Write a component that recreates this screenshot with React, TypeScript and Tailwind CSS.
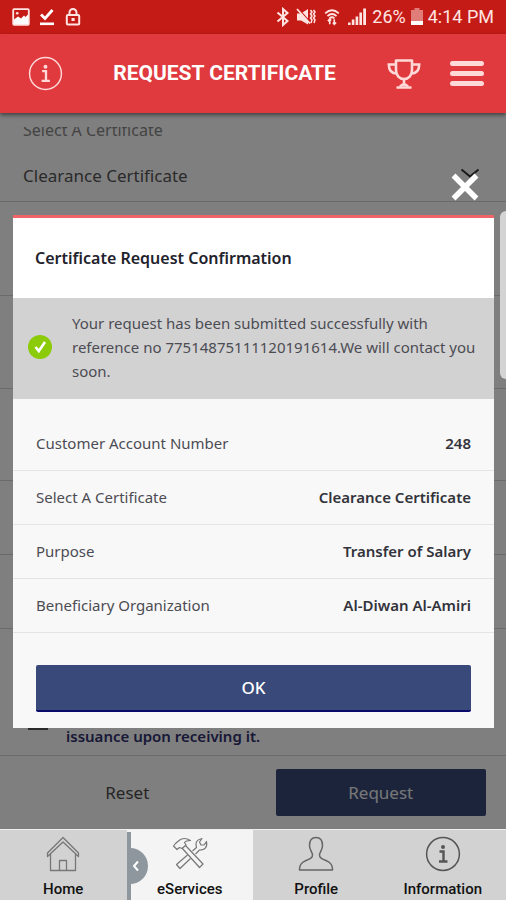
import React from "react";

const details = [
  { label: "Customer Account Number", value: "248" },
  { label: "Select A Certificate", value: "Clearance Certificate" },
  { label: "Purpose", value: "Transfer of Salary" },
  { label: "Beneficiary Organization", value: "Al-Diwan Al-Amiri" },
];

function StatusBar() {
  return (
    <div className="flex h-[34px] items-center justify-between bg-[#c51b17] px-3 text-lg text-[#ffe4e1]">
      <div className="flex items-center gap-2">
        <svg width="18" height="18" viewBox="0 0 18 18" fill="none">
          <rect x="1.2" y="1.2" width="15.6" height="15.6" rx="1" stroke="currentColor" strokeWidth="1.8" />
          <path d="M2 16V11.5L6 8.5L9 10.5L12 7.5L13.5 9L16 6.5V16Z" fill="#fff" />
          <circle cx="5.2" cy="5.2" r="1.3" fill="currentColor" />
        </svg>
        <svg width="18" height="18" viewBox="0 0 18 18" fill="none" stroke="#fff">
          <path d="M3 6.5L7 10.5L14.5 2" strokeWidth="2.8" />
          <path d="M2 15.8H16" strokeWidth="2.6" />
        </svg>
        <svg width="18" height="18" viewBox="0 0 18 18" fill="none" stroke="currentColor">
          <rect x="2.8" y="7" width="12.4" height="9.5" rx="1" strokeWidth="2" />
          <path d="M5.5 7V4.5a3.5 3.5 0 0 1 7 0V7" strokeWidth="2" />
          <rect x="7.5" y="10" width="3.2" height="3" fill="currentColor" stroke="none" />
        </svg>
      </div>
      <div className="flex items-center gap-[5px]">
        <svg width="14" height="20" viewBox="0 0 14 20" fill="none" stroke="currentColor" strokeWidth="2">
          <path d="M1.5 5.5L11.5 14L7 18V2L11.5 6L1.5 14.5" />
        </svg>
        <svg width="22" height="20" viewBox="0 0 22 20" fill="none" stroke="currentColor">
          <path d="M2 6.5H6L13 2V17.5L6 13.5H2Z" fill="currentColor" stroke="none" />
          <path d="M3 1.5L16 16" stroke="#c51b17" strokeWidth="1.4" />
          <path d="M2 2L15 16.5" strokeWidth="1.8" />
          <path d="M15.5 3L17 5L15.5 7L17 9L15.5 11L17 13L16 16M18.5 3L20 5L18.5 7L20 9L18.5 11L20 13L19 16" strokeWidth="1.5" />
        </svg>
        <svg width="20" height="20" viewBox="0 0 22 20" fill="none" stroke="currentColor" strokeWidth="2">
          <path d="M3.5 6Q11 -1 18.5 6M6 9Q11 4.5 16 9M8.3 11.5Q11 9 13.7 11.5" />
          <path d="M8.5 18V12.5M6.5 14.5L8.5 12.3L10 14M13.5 12.5V18M12 16L13.5 18L15.5 16" strokeWidth="1.8" />
        </svg>
        <svg width="20" height="20" viewBox="0 0 20 20" fill="currentColor">
          <path d="M1 18V15.5H3.6V18ZM4.8 18V12.5H7.4V18ZM8.6 18V9.5H11.2V18ZM12.4 18V5.5H15V18ZM16.2 18V1.5H19V18Z" />
        </svg>
        <span>26%</span>
        <svg width="12" height="20" viewBox="0 0 12 20">
          <path d="M0 3H3.5V1H8.5V3H12V18H0Z" fill="#e07d78" />
          <path d="M0 14H12V18H0Z" fill="#fff" />
        </svg>
        <span>4:14 PM</span>
      </div>
    </div>
  );
}

function InfoIcon({ size }: { size: number }) {
  return (
    <svg width={size} height={size} viewBox="0 0 36 36" fill="none" stroke="currentColor">
      <circle cx="18" cy="18" r="16.4" strokeWidth="1.5" />
      <circle cx="18" cy="11" r="2" fill="currentColor" stroke="none" />
      <path d="M14.5 15.5H18.5V25M14 25.5H22.5" strokeWidth="2.4" />
    </svg>
  );
}

function AppBar() {
  return (
    <header className="relative z-10 flex h-[79px] items-center bg-[#e03a3e] pr-[22px] pl-7 text-[#ffd9d8] shadow-[0_2px_4px_rgba(0,0,0,0.5)]">
      <button aria-label="Help">
        <InfoIcon size={35} />
      </button>
      <h1 className="flex-1 text-center font-['Roboto',sans-serif] text-[21px] font-bold text-white">
        REQUEST CERTIFICATE
      </h1>
      <div className="flex items-center gap-7">
        <button aria-label="Rewards">
          <svg width="36" height="34" viewBox="0 0 36 34" fill="none" stroke="currentColor" strokeWidth="2.6">
            <path d="M10 3.5H26V13C26 18.5 22.5 22 18 22S10 18.5 10 13Z" strokeLinejoin="round" />
            <path d="M10 7.5H2.8C2.8 13.5 6 16.5 11 16.5M26 7.5H33.2C33.2 13.5 30 16.5 25 16.5" />
            <path d="M18 22V29M10.5 30.5H25.5" />
            <path d="M14 29.5Q18 25 22 29.5" />
          </svg>
        </button>
        <button aria-label="Menu" className="flex w-[34px] flex-col gap-[5px]">
          <span className="h-[5px] rounded-full bg-current" />
          <span className="h-[5px] rounded-full bg-current" />
          <span className="h-[5px] rounded-full bg-current" />
        </button>
      </div>
    </header>
  );
}

function RequestForm() {
  return (
    <form className="flex flex-1 flex-col bg-white pt-[14px] text-[#555]">
      <div className="flex-1 overflow-hidden">
        <div className="flex h-[75px] flex-col border-b border-[#d4d4d4] px-[23px]">
          <label htmlFor="certificate" className="-mt-[9px] block text-base leading-6 text-[#888]">
            Select A Certificate
          </label>
          <div className="relative mt-[22px]">
            <select id="certificate" className="w-full appearance-none text-[17px] leading-6">
              <option>Clearance Certificate</option>
            </select>
            <svg className="absolute top-1 right-[3px] text-[#333]" width="20" height="12" viewBox="0 0 20 12" fill="none" stroke="currentColor" strokeWidth="2">
              <path d="M1.5 1.5L10 8.5L18.5 1.5" />
            </svg>
          </div>
        </div>
        <div className="h-[94px] border-b border-[#d4d4d4]" />
        <div className="h-[93px] border-b border-[#d4d4d4]" />
        <div className="h-[92px] border-b border-[#d4d4d4]" />
        <div className="h-[74px] border-b border-[#d4d4d4]" />
        <div className="h-[74px] border-b border-[#d4d4d4]" />
        <div className="flex h-[126px] items-end gap-[18px] px-7 pb-[7px]">
          <input type="checkbox" aria-label="Accept" className="mb-[18px] size-5 appearance-none border-2 border-[#555]" />
          <span className="text-[15px] leading-6 font-semibold text-[#30306e]">issuance upon receiving it.</span>
        </div>
      </div>
      <div className="grid grid-cols-2 gap-[43px] border-t border-[#d4d4d4] py-[13px] pr-5 pl-[22px] text-[17px]">
        <button type="reset" className="text-[#4a4a4a]">
          Reset
        </button>
        <button type="button" className="h-[47px] rounded-xs bg-[#394979] text-[#eee]">
          Request
        </button>
      </div>
    </form>
  );
}

function ConfirmationDialog() {
  return (
    <div className="absolute inset-0 bg-black/50 pt-[60px] pr-3 pl-[13px] text-[#4c4c54]">
      <div className="flex h-[42px] items-start justify-end pr-[14px] text-white">
        <button aria-label="Close">
          <svg width="30" height="28" viewBox="0 0 30 28" fill="none" stroke="currentColor" strokeWidth="5.5">
            <path d="M3.5 2.5L26.5 25.5M26.5 2.5L3.5 25.5" />
          </svg>
        </button>
      </div>
      <section role="dialog" aria-label="Certificate Request Confirmation" className="bg-[#f8f8f8]">
        <h2 className="border-t-[3px] border-[#ee6467] bg-white px-[22px] py-7 text-base leading-6 font-semibold text-[#22222c]">
          Certificate Request Confirmation
        </h2>
        <div className="flex items-center gap-5 bg-[#d2d2d2] pt-[13px] pr-3 pb-4 pl-[15px] text-[15px] leading-6">
          <svg width="24" height="24" viewBox="0 0 24 24" className="shrink-0">
            <circle cx="12" cy="12" r="12" fill="#8bcb0a" />
            <path d="M7.5 12L10.8 16L17 7" fill="none" stroke="#fff" strokeWidth="2.6" />
          </svg>
          <p>Your request has been submitted successfully with reference no 77514875111120191614.We will contact you soon.</p>
        </div>
        <dl className="pt-[18px] text-[15px]">
          {details.map((row) => (
            <div key={row.label} className="flex h-[54px] items-center justify-between border-b border-[#e4e4e4] px-[23px]">
              <dt>{row.label}</dt>
              <dd className="font-semibold text-[#33333b]">{row.value}</dd>
            </div>
          ))}
        </dl>
        <div className="px-[23px] pt-8 pb-4">
          <button className="h-[47px] w-full rounded-xs border-b-2 border-[#0a0a6c] bg-[#394979] text-[17px] font-medium text-white">OK</button>
        </div>
      </section>
      <div className="absolute top-[98px] right-0 h-[168px] w-[6px] rounded-l-md bg-[#d4d4d4]" />
    </div>
  );
}

function TabBar() {
  const tab = "flex flex-col items-center gap-[7px] pt-[6px] pb-1";
  return (
    <nav className="grid h-[71px] grid-cols-4 border-t border-[#eee] bg-[#d2d2d2] font-['Roboto',sans-serif] text-[15px] leading-5 font-medium text-[#111]">
      <a href="#home" className={tab}>
        <svg width="34" height="36" viewBox="0 0 34 36" fill="none" stroke="#777" strokeWidth="1.3" strokeLinejoin="round">
          <path d="M1.5 17L17 1.5L32.5 17V20.5L17 6L1.5 20.5Z" />
          <path d="M4.5 18V34.5H29.5V18M13.5 34.5V24.5H20.5V34.5" />
        </svg>
        Home
      </a>
      <a href="#eservices" className={tab + " relative bg-[#f4f4f4]"}>
        <span className="absolute inset-y-[2px] left-0 w-[4px] bg-[#8e979e]" />
        <span className="absolute top-[18px] left-[3px] flex h-9 w-[18px] items-center rounded-r-full bg-[#8e979e] pl-[2px] text-white">
          <svg width="8" height="12" viewBox="0 0 8 12" fill="none" stroke="currentColor" strokeWidth="2">
            <path d="M6 1.5L2 6L6 10.5" />
          </svg>
        </span>
        <svg width="36" height="36" viewBox="0 0 36 36" fill="none" stroke="#777" strokeWidth="1.2" strokeLinejoin="round">
          <path d="M10 12L27.5 31.5L31 28L13.5 9.5" />
          <path d="M1.5 10L5 13.5L7.5 11.5L10 12.5L14 9L12.5 6.5Q14 4.5 18.5 4.5Q12 0.5 7 4.5L3.5 7.5Z" />
          <path d="M20.5 15L24.5 11.5Q22 4 30 2.5L27.5 6L29 9L32 9L34.5 5.5Q36 14 27.5 14L23.5 18" />
          <path d="M15.5 19L4.5 28.5L8 32.5L18.5 22.5" />
        </svg>
        eServices
      </a>
      <a href="#profile" className={tab}>
        <svg width="36" height="36" viewBox="0 0 36 36" fill="none" stroke="#666" strokeWidth="1.5" strokeLinejoin="round">
          <path d="M18 1.5C13 1.5 11.5 5 11.5 9.5C11.5 14 14 15.5 14.5 18.5C14.8 22 12 23 8 24.5C3 26.5 1.5 29 1.5 34H34.5C34.5 29 33 26.5 28 24.5C24 23 21.2 22 21.5 18.5C22 15.5 24.5 14 24.5 9.5C24.5 5 23 1.5 18 1.5Z" />
        </svg>
        Profile
      </a>
      <a href="#information" className={tab}>
        <span className="text-[#555]">
          <InfoIcon size={36} />
        </span>
        Information
      </a>
    </nav>
  );
}

export default function App() {
  return (
    <div className="flex min-h-screen flex-col font-['Noto_Sans',sans-serif]">
      <div className="font-['Roboto',sans-serif]">
        <StatusBar />
      </div>
      <AppBar />
      <main className="relative flex flex-1 flex-col">
        <RequestForm />
        <ConfirmationDialog />
      </main>
      <TabBar />
    </div>
  );
}
